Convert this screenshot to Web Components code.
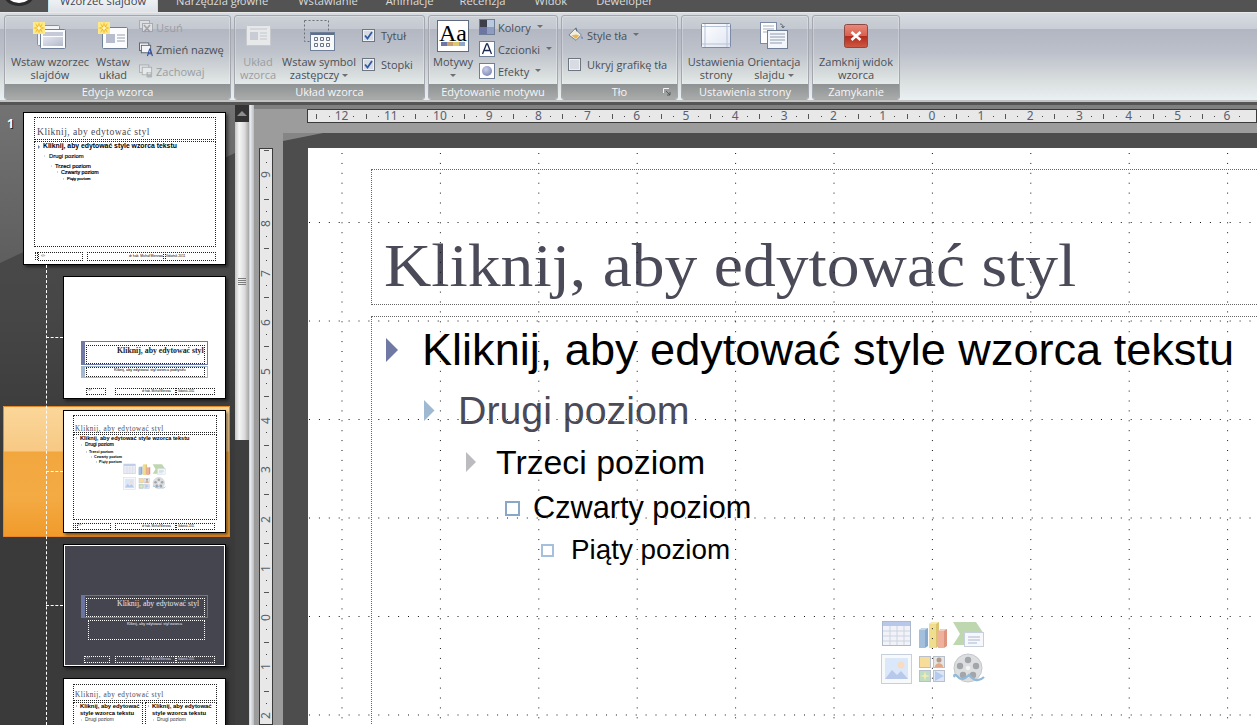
<!DOCTYPE html>
<html lang="pl">
<head>
<meta charset="utf-8">
<title>Wzorzec slajdów</title>
<style>
  html, body { margin: 0; height: 725px; overflow: hidden; background: #3c3c3c; }
  body { font: 11px "Open Sans", "Noto Sans", sans-serif; }
</style>
</head>
<body>
<script>
const star = (x, y) => `
  <g transform="translate(${x} ${y})">
    <rect width="12" height="12" fill="#fce98a"/>
    <path d="M6 0l1 4 3-3-2 4 4 1-4 1 2 4-3-3-1 4-1-4-3 3 2-4-4-1 4-1-2-4 3 3z" fill="#f3b516"/>
    <path d="M6 3l1 2 2 1-2 1-1 2-1-2-2-1 2-1z" fill="#fff6c8"/>
  </g>`;

const ICONS = {
  master: `<svg width="34" height="28" viewBox="0 0 34 28">
    <rect x="4.5" y="3.5" width="22" height="20" rx="1" fill="#f2f4f8" stroke="#8392a8"/>
    <rect x="7.5" y="7.5" width="25" height="19" rx="1" fill="#fbfcfe" stroke="#6f7f97"/>
    <defs><linearGradient id="m" x1="0" y1="0" x2="1" y2="1"><stop offset="0" stop-color="#e4e6ee"/><stop offset="1" stop-color="#b4bacd"/></linearGradient></defs>
    <rect x="10" y="10" width="20" height="4" fill="#c6cad8"/><rect x="10" y="15" width="20" height="9" fill="url(#m)"/>
    ${star(0, 0)}</svg>`,
  layout: `<svg width="30" height="28" viewBox="0 0 30 28">
    <rect x="4.5" y="5.5" width="25" height="21" rx="1" fill="#fbfcfe" stroke="#6f7f97"/>
    <rect x="8" y="12" width="9" height="9" fill="#b7bdcf"/>
    <path d="M19 13h8M19 16h8M19 19h8" stroke="#98a0b0"/>
    ${star(0, 0)}</svg>`,
  remove: `<svg width="14" height="14" viewBox="0 0 14 14" opacity=".55">
    <rect x=".5" y=".5" width="10" height="8" fill="#eee" stroke="#8e9298"/><rect x="3.5" y="3.5" width="10" height="8" fill="#f6f6f6" stroke="#8e9298"/>
    <path d="M5 5l6 7M11 5l-6 7" stroke="#8b8b8b" stroke-width="1.8"/></svg>`,
  rename: `<svg width="14" height="15" viewBox="0 0 15 15">
    <rect x=".5" y=".5" width="10" height="8" fill="#fff" stroke="#59606b"/><rect x="2.5" y="3" width="10" height="8" fill="#f2f4f8" stroke="#59606b"/>
    <path d="M9 14.5L11.400 7h.6l2.400 7.500M10 12h3.600" fill="none" stroke="#2d4fa8" stroke-width="1.200"/></svg>`,
  save: `<svg width="14" height="14" viewBox="0 0 15 14" opacity=".55">
    <rect x=".5" y=".5" width="10" height="8" fill="#eee" stroke="#8e9298"/><rect x="3.5" y="3" width="10" height="8" fill="#f6f6f6" stroke="#8e9298"/>
    <rect x="8" y="8" width="6" height="6" rx="1" fill="#8f9397"/><rect x="9.500" y="8.500" width="3" height="2" fill="#ddd"/></svg>`,
  masterOff: `<svg width="25" height="21" viewBox="0 0 25 21">
    <rect x=".5" y=".5" width="24" height="20" rx="1" fill="#e6e8ea" stroke="#c6cace"/>
    <rect x="4" y="7" width="8" height="8" fill="#c9ccd2"/>
    <path d="M14 8h7M14 11h7M14 14h7" stroke="#c2c6cc"/><path d="M4 4h17" stroke="#d4d7dc" stroke-width="2"/></svg>`,
  symbol: `<svg width="31" height="31" viewBox="0 0 31 31">
    <rect x=".5" y=".5" width="24" height="21" fill="none" stroke="#6a6f78" stroke-dasharray="2 2"/>
    <rect x="6.500" y="12.500" width="24" height="18" fill="#f7f8fa" stroke="#6f7f97"/><path d="M7 14h23" stroke="#5f6f8b" stroke-width="2"/>
    <path d="M10.500 17.500h3v3h-3zM16.500 17.500h3v3h-3zM22.500 17.500h3v3h-3zM10.500 23.500h3v3h-3zM16.500 23.500h3v3h-3zM22.500 23.500h3v3h-3z" fill="none" stroke="#6b7486"/></svg>`,
  colors: `<svg width="16" height="16" viewBox="0 0 16 16">
    <rect x=".5" y=".5" width="15" height="15" fill="#fff" stroke="#6f7f97"/>
    <rect x="1" y="1" width="7" height="7" fill="#3e3e4a"/><rect x="8" y="1" width="7" height="7" fill="#b9c9de"/><rect x="1" y="8" width="7" height="7" fill="#6d76a3"/><rect x="8" y="8" width="7" height="7" fill="#8f9cc0"/></svg>`,
  fonts: `<svg width="16" height="16" viewBox="0 0 16 16"><rect x=".5" y=".5" width="15" height="15" fill="#fff" stroke="#6f7f97"/>
    <path d="M3.500 13L7.500 3h1L12.500 13M5.500 9.500h5" fill="none" stroke="#1c2a52" stroke-width="1.300"/></svg>`,
  effects: `<svg width="16" height="16" viewBox="0 0 16 16"><defs><radialGradient id="e" cx=".4" cy=".35" r=".7"><stop offset="0" stop-color="#c8cee8"/><stop offset="1" stop-color="#7e88b8"/></radialGradient></defs>
    <rect x=".5" y=".5" width="15" height="15" fill="#fff" stroke="#6f7f97"/><circle cx="8" cy="8" r="5" fill="url(#e)"/></svg>`,
  paint: `<svg width="16" height="16" viewBox="0 0 18 16">
    <path d="M1 8l7-7 7 7-6 6z" fill="#f2eede" stroke="#6a7a96"/><path d="M4 8.500l5-1 3.500 1-3.500 4z" fill="#e8b64a"/>
    <path d="M8 1l1-1 1 4" fill="none" stroke="#4c5c78"/><path d="M15.500 9c1 1.500 1.500 2.500.5 3.500-1-.5-1.200-2-.5-3.500z" fill="#4a74b8"/></svg>`,
  setup: `<svg width="30" height="25" viewBox="0 0 30 25">
    <defs><linearGradient id="s" x1="0" y1="0" x2="1" y2="1"><stop offset="0" stop-color="#fff"/><stop offset="1" stop-color="#dfe5f2"/></linearGradient></defs>
    <rect x=".5" y=".5" width="29" height="24" rx="1" fill="url(#s)" stroke="#7d8ba6"/><path d="M4 1v23M26 1v23M1 3.500h28M1 21h28" stroke="#b7c2d6"/></svg>`,
  orient: `<svg width="28" height="27" viewBox="0 0 28 27">
    <rect x=".5" y=".5" width="16" height="21" fill="#fff" stroke="#7d8ba6"/><path d="M3 4h11M3 7h11M3 10h8" stroke="#a5aebd"/>
    <path d="M20 2c2 0 3 1 3 3M21.500 4l1.500 2 1.500-2" fill="none" stroke="#5c6778"/>
    <rect x="7.500" y="8.500" width="20" height="18" fill="#f3f6fb" stroke="#6f7f97"/><path d="M10 12h15M10 15h15M10 18h15M10 21h12" stroke="#8f9bb0"/></svg>`,
  close: `<svg width="24" height="24" viewBox="0 0 24 24">
    <defs><linearGradient id="c" x1="0" y1="0" x2="0" y2="1"><stop offset="0" stop-color="#e88a7c"/><stop offset=".5" stop-color="#d9604e"/><stop offset=".51" stop-color="#b22a1c"/><stop offset="1" stop-color="#cf5a44"/></linearGradient></defs>
    <rect x=".5" y=".5" width="23" height="23" rx="2" fill="url(#c)" stroke="#8c4a44"/><path d="M7.500 8l9 8M16.500 8l-9 8" stroke="#fff" stroke-width="2.600"/></svg>`,
  launcher: `<svg width="9" height="9" viewBox="0 0 9 9"><path d="M.5 5V.5H6" fill="none" stroke="#f4f4f4"/><path d="M3 3l4 4M7 4v3H4" fill="none" stroke="#56585a"/></svg>`
};

class XIcon extends HTMLElement {
  constructor() {
    super();
    this.attachShadow({mode: 'open'});
    this.shadowRoot.innerHTML = `<style>:host { display: inline-flex; flex: none; } svg { display: block; }</style>` + ICONS[this.getAttribute('name')];
  }
}
customElements.define('x-icon', XIcon);

class XCaret extends HTMLElement {
  constructor() {
    super();
    this.attachShadow({mode: 'open'});
    this.shadowRoot.innerHTML = `<style>
      :host { display: inline-block; width: 0; height: 0; margin: 0 0 2px 3px; vertical-align: middle;
        border-left: 3px solid transparent; border-right: 3px solid transparent; border-top: 3px solid #6c6f74; }
    </style>`;
  }
}
customElements.define('x-caret', XCaret);

class XTabs extends HTMLElement {
  constructor() {
    super();
    this.attachShadow({mode: 'open'});
    this.shadowRoot.innerHTML = `<style>
      :host { display: flex; height: 12px; background: #535353; overflow: hidden; position: relative; flex: none; }
      .orb { position: absolute; left: 6px; top: -17px; width: 26px; height: 20px; border-radius: 50%; background: #fff; box-shadow: 0 0 0 3px #2c2c2c; }
      .row { display: flex; margin-left: 48px; height: 12px; font: 11.2px/1 "Open Sans", sans-serif; color: #dcdcdc; }
      .tab { margin-top: -5px; white-space: nowrap; }
      .active { width: 110px; height: 12px; background: linear-gradient(#eef1f4, #dfe3e8); color: #3c4350;
        box-shadow: inset 1px 0 #bfe6ee, inset -1px 0 #bfe6ee; text-align: center; margin-right: 18px; }
      .active span { display: block; margin-top: -5px; }
    </style>
    <div class="orb"></div>
    <div class="row">
      <div class="active"><span>Wzorzec slajdów</span></div>
      <div class="tab" style="margin-right:30px">Narzędzia główne</div>
      <div class="tab" style="margin-right:28px">Wstawianie</div>
      <div class="tab" style="margin-right:26px">Animacje</div>
      <div class="tab" style="margin-right:29px">Recenzja</div>
      <div class="tab" style="margin-right:29px">Widok</div>
      <div class="tab">Deweloper</div>
    </div>`;
  }
}
customElements.define('x-tabs', XTabs);

class XRibbon extends HTMLElement {
  constructor() {
    super();
    this.attachShadow({mode: 'open'});
    this.shadowRoot.innerHTML = `<style>
      :host { display: flex; flex: none; box-sizing: border-box; height: 93px; gap: 3px; padding: 2px 0 5px 4px;
        background: linear-gradient(#d7dbe2 0, #c9cdd5 16px, #b2b6c2 16px, #bcc0ca 40px, #dbe0e0 70px, #e8eff0 85px, #e8eff0 87px, #c3c3c3 87px, #c3c3c3 89px, #555 89px);
        border-top: 1px solid #e9e9e9; }
    </style><slot></slot>`;
  }
}
customElements.define('x-ribbon', XRibbon);

class XGroup extends HTMLElement {
  constructor() {
    super();
    this.attachShadow({mode: 'open'});
    this.shadowRoot.innerHTML = `<style>
      :host { display: flex; flex-direction: column; box-sizing: border-box; height: 85px; flex: none;
        border: 1px solid #a4a7ad; border-radius: 3px; overflow: hidden; box-shadow: inset 0 0 0 1px rgba(255,255,255,.25);
        background: linear-gradient(#ccd0d7 0, #c4c8d0 13px, #b3b7c2 13px, #bec2cb 36px, #d9dede 60px, #e4e9ea 68px); }
      .body { display: flex; height: 68px; flex: none; }
      .foot { flex: 1; display: flex; align-items: center; justify-content: center; position: relative;
        background: linear-gradient(#8f9292, #a9abab); color: #f6f6f6; font: 11px/1 "Open Sans", sans-serif; }
      .launch { position: absolute; right: 5px; top: 4px; display: flex; }
    </style>
    <div class="body"><slot></slot></div>
    <div class="foot"><span id="label"></span><div class="launch"><slot name="launcher"></slot></div></div>`;
    this.shadowRoot.querySelector('#label').textContent = this.getAttribute('label');
  }
}
customElements.define('x-group', XGroup);

class XBig extends HTMLElement {
  constructor() {
    super();
    this.attachShadow({mode: 'open'});
    this.shadowRoot.innerHTML = `<style>
      :host { display: flex; flex-direction: column; align-items: center; flex: none; text-align: center;
        font: 11px/13px "Open Sans", sans-serif; color: #4a4f57; white-space: nowrap; }
      :host([disabled]) { color: #9a9da2; }
      .icon { height: 39px; display: flex; align-items: center; justify-content: center; }
    </style>
    <div class="icon"><slot name="icon"></slot></div><div><slot></slot></div>`;
  }
}
customElements.define('x-big', XBig);

class XColumn extends HTMLElement {
  constructor() {
    super();
    this.attachShadow({mode: 'open'});
    this.shadowRoot.innerHTML = `<style>
      :host { display: flex; flex-direction: column; flex: none; }
      :host([wide]) { padding-top: 11px; gap: 13px; }
    </style><slot></slot>`;
  }
}
customElements.define('x-column', XColumn);

class XSmall extends HTMLElement {
  constructor() {
    super();
    this.attachShadow({mode: 'open'});
    this.shadowRoot.innerHTML = `<style>
      :host { display: flex; align-items: center; gap: 3px; height: 22px; font: 11px/1 "Open Sans", sans-serif; white-space: nowrap; color: #4a4f57; }
      :host([disabled]) { color: #9a9da2; }
      :host([wide]) { height: 16px; }
    </style><slot></slot>`;
  }
}
customElements.define('x-small', XSmall);

class XCheck extends HTMLElement {
  constructor() {
    super();
    this.attachShadow({mode: 'open'});
    const tick = this.hasAttribute('checked') ? '<path d="M3 6.500l2.500 3L10 3" fill="none" stroke="#2f5aa8" stroke-width="1.800"/>' : '';
    this.shadowRoot.innerHTML = `<style>
      :host { display: flex; align-items: center; gap: 6px; height: 16px; font: 11px/1 "Open Sans", sans-serif; white-space: nowrap; color: #4a4f57; }
      svg { flex: none; }
    </style>
    <svg width="13" height="13" viewBox="0 0 13 13"><rect x=".5" y=".5" width="12" height="12" fill="#eef0f3" stroke="#6d7580"/><rect x="2" y="2" width="9" height="9" fill="#d8dce2"/>${tick}</svg>
    <slot></slot>`;
  }
}
customElements.define('x-check', XCheck);

class XMotif extends HTMLElement {
  constructor() {
    super();
    this.attachShadow({mode: 'open'});
    this.shadowRoot.innerHTML = `<style>
      :host { display: flex; flex-direction: column; align-items: center; box-sizing: border-box; width: 32px; height: 32px; background: #fff; border: 1px solid #5f6b7e; position: relative; }
      .bar { position: absolute; left: 3px; right: 3px; top: 21px; height: 4px; background: linear-gradient(90deg, #6d76a3 0 25%, #c8a070 25% 50%, #e0c870 50% 75%, #8fa8c8 75%); }
      span { font: 24px/24px "Liberation Serif", serif; color: #000; position: relative; }
    </style><div class="bar"></div><span>Aa</span>`;
  }
}
customElements.define('x-motif', XMotif);

const contentIcons = `<svg viewBox="0 0 104 66" width="100%" height="100%" style="display:block">
  <rect x="1.500" y="2.500" width="28" height="24" fill="#f1f3f8" stroke="#adb8cb"/><rect x="2" y="3" width="27" height="4" fill="#b7c8ec"/>
  <path d="M2 12h27M2 17h27M2 22h27M9 7v19M16 7v19M23 7v19" stroke="#cdd3e0"/>
  <path d="M38 11l3-2h6v18l-3 2H38z" fill="#87a9cb"/><path d="M38 11l3-2h6l-3 2z" fill="#c5d8ea"/><rect x="38" y="11" width="6" height="18" fill="#a4bfdb"/>
  <path d="M48 5l3-2h7v24l-3 2h-7z" fill="#dcc46e"/><path d="M48 5l3-2h7l-3 2z" fill="#f6eab4"/><rect x="48" y="5" width="7" height="24" fill="#f0dd90"/>
  <path d="M57 12l3-2h6v17l-3 2h-6z" fill="#dd9580"/><path d="M57 12l3-2h6l-3 2z" fill="#f5cdbf"/><rect x="57" y="12" width="6" height="17" fill="#efb09c"/>
  <path d="M72 3h23l8 12-8 11H72l7-11z" fill="#bfd7ae"/><rect x="83.500" y="13.500" width="19" height="14" fill="#f6f8fb" stroke="#c5d0dc"/><path d="M87 18h12M87 21h12M87 24h9" stroke="#a9b8cd"/>
  <rect x=".5" y="35.500" width="30" height="29" fill="#f7f9fb" stroke="#c5d0dc"/><rect x="4" y="39" width="23" height="21" fill="#dbe8fa"/><circle cx="20" cy="46" r="3.500" fill="#f8dcc2"/><path d="M4 60l7-9 5 5 4-4 7 8z" fill="#b8c8ea"/>
  <rect x="38.500" y="37.500" width="11" height="11" fill="#f7dc9a" stroke="#b8c0cd"/><rect x="52.500" y="37.500" width="11" height="11" fill="#e8e4e0" stroke="#b8c0cd"/><circle cx="58" cy="41" r="2.500" fill="#b09a8c"/><path d="M54 48c0-5 8-5 8 0z" fill="#e0a888"/>
  <rect x="38.500" y="51.500" width="11" height="11" fill="#bfdcc4" stroke="#b8c0cd"/><path d="M44 52l1 4 4 1-4 1-1 4-1-4-4-1 4-1z" fill="#f2ecb0"/><rect x="52.500" y="51.500" width="11" height="11" fill="#dce6f6" stroke="#b8c0cd"/><path d="M54 52l9 5-9 5z" fill="#b5cbee"/>
  <circle cx="87" cy="49" r="14" fill="#dcdee0" stroke="#c6c8cc"/><circle cx="87" cy="49" r="2.200" fill="#f4f4f4"/>
  <circle cx="87" cy="41" r="3.200" fill="#a2a6aa"/><circle cx="95" cy="47" r="3.200" fill="#a2a6aa"/><circle cx="92" cy="56" r="3.200" fill="#a2a6aa"/><circle cx="82" cy="56" r="3.200" fill="#a2a6aa"/><circle cx="79" cy="47" r="3.200" fill="#a2a6aa"/>
  <path d="M74 58c-2-2 0-3 2-1 4 5 8 3 12-1 5 6 10 7 15 2" fill="none" stroke="#92bad8" stroke-width="2.200"/>
</svg>`;

class XContentIcons extends HTMLElement {
  constructor() {
    super();
    this.attachShadow({mode: 'open'});
    this.shadowRoot.innerHTML = `<style>:host { display: block; position: absolute; }</style>` + contentIcons;
  }
}
customElements.define('x-content-icons', XContentIcons);

// one thumbnail: the boxes and texts sit on the slide as on a free canvas, all in px from its corner
const ph = (l, t, w, h, c) => `<i class="ph" style="left:${l}px;top:${t}px;width:${w}px;height:${h}px;${c ? 'border-color:' + c : ''}"></i>`;
const tx = (l, t, size, text, extra) => `<b class="tx" style="left:${l}px;top:${t}px;font-size:${size}px;${extra || ''}">${text}</b>`;
const mk = (l, t, s, c) => `<i class="mk" style="left:${l}px;top:${t}px;border-width:${s}px 0 ${s}px ${s}px;border-left-color:${c}"></i>`;
const serif = 'font-family:Liberation Serif,serif;color:#4a4a58;letter-spacing:.45px;';
const heavy = '-webkit-text-stroke:.2px #000;';
const band = (l, t, w, h, c) => `<i class="band" style="left:${l}px;top:${t}px;width:${w}px;height:${h}px;border-color:${c};border-left-width:4px"></i>`;

const SLIDES = {
  master: () =>
    ph(10, 4, 182, 23) + ph(10, 28, 182, 106) + ph(11, 139, 3, 8) + ph(14, 139, 45, 9) + ph(63, 139, 77, 9) + ph(141, 139, 51, 9) +
    tx(13, 13, 9.6, 'Kliknij, aby edytować styl', serif) +
    tx(19, 29, 6.85, 'Kliknij, aby edytować style wzorca tekstu', 'font-weight:bold') + mk(14, 32, 2, '#7079a4') +
    tx(25, 40, 5.9, 'Drugi poziom', 'color:#333;' + heavy) + mk(20, 42, 1.5, '#a0b9d2') +
    tx(31, 50, 5.8, 'Trzeci poziom', heavy) + mk(27, 52, 1.5, '#b8b8bc') +
    tx(37, 56, 5.3, 'Czwarty poziom', heavy) + mk(33, 58, 1.3, '#8aa7c6') +
    tx(43, 64, 4.1, 'Piąty poziom', heavy) + mk(39, 65, 1.2, '#8aa7c6') +
    tx(17, 142, 3.3, '‹#›') + tx(105, 142, 3.3, 'dr hab. Michał Mierzwa') + tx(142, 142, 3.3, 'Gdańsk 2011'),
  title: () =>
    band(17, 64, 127, 24, '#7079a4') + band(17, 89, 127, 12, '#a2b8d0') +
    ph(22, 68, 119, 19) + ph(22, 90, 119, 10) +
    tx(53, 69, 7.8, 'Kliknij, aby edytować styl', 'font-family:Liberation Serif,serif;color:#222;font-weight:bold') +
    tx(50, 91, 3.8, 'Kliknij, aby edytować styl wzorca podtytułu') +
    tx(24, 112, 2.8, '‹#›') + ph(22, 111, 20, 7) + ph(51, 111, 61, 7) + ph(112, 111, 39, 7) + tx(78, 113, 2.8, 'dr hab. Michał Mierzwa') + tx(114, 113, 2.8, 'Gdańsk 2011'),
  content: () =>
    ph(9, 4, 144, 18) + ph(9, 23, 144, 86) +
    tx(11, 14, 7.2, 'Kliknij, aby edytować styl', serif + 'letter-spacing:.5px') +
    tx(16, 24, 5.6, 'Kliknij, aby edytować style wzorca tekstu', 'font-weight:bold') + mk(12, 26, 1.5, '#7079a4') +
    tx(21, 31, 4.9, 'Drugi poziom', 'color:#333;' + heavy) + mk(17, 33, 1.2, '#a0b9d2') +
    tx(25, 39, 3.7, 'Trzeci poziom', 'font-weight:bold') + mk(22, 40, 1, '#a0a0a4') +
    tx(30, 44, 3.7, 'Czwarty poziom', 'font-weight:bold') + mk(27, 45, 1, '#8aa7c6') +
    tx(35, 49, 3.7, 'Piąty poziom', 'font-weight:bold') + mk(32, 50, 1, '#8aa7c6') +
    `<x-content-icons style="left:59px;top:52px;width:43px;height:27px"></x-content-icons>` +
    ph(9, 112, 3, 7) + tx(14, 113, 2.8, '‹#›') + ph(13, 112, 34, 7) + ph(51, 112, 61, 7) + ph(112, 112, 39, 7) + tx(78, 114, 2.8, 'dr hab. Michał Mierzwa') + tx(114, 114, 2.8, 'Gdańsk 2011'),
  dark: () =>
    band(16, 49, 127, 23, '#6c75a0') + ph(21, 52, 119, 19, '#fff') + ph(23, 74, 117, 20, '#fff') +
    tx(52, 53, 7.8, 'Kliknij, aby edytować styl', 'font-family:Liberation Serif,serif;color:#e4e8f0') +
    tx(62, 76, 3.8, 'Kliknij, aby edytować styl wzorca', 'color:#e4e8f0') +
    ph(19, 110, 26, 7, '#fff') + ph(50, 110, 61, 7, '#fff') + ph(111, 110, 39, 7, '#fff') +
    tx(21, 111, 2.8, '‹#›', 'color:#dde') + tx(77, 112, 2.8, 'dr hab. Michał Mierzwa', 'color:#dde') + tx(113, 112, 2.8, 'Gdańsk 2011', 'color:#dde'),
  two: () =>
    ph(9, 5, 144, 17) + ph(9, 23, 70, 100) + ph(81, 23, 72, 100) +
    tx(11, 12, 7.2, 'Kliknij, aby edytować styl', serif + 'letter-spacing:.5px') +
    tx(16, 24, 5.9, 'Kliknij, aby edytować', 'font-weight:bold') + tx(16, 31, 5.9, 'style wzorca tekstu', 'font-weight:bold') + tx(21, 38, 4.9, 'Drugi poziom', 'color:#333') + mk(12, 26, 1.5, '#7079a4') + mk(17, 40, 1.2, '#a0b9d2') +
    tx(88, 24, 5.9, 'Kliknij, aby edytować', 'font-weight:bold') + tx(88, 31, 5.9, 'style wzorca tekstu', 'font-weight:bold') + tx(93, 38, 4.9, 'Drugi poziom', 'color:#333') + mk(84, 26, 1.5, '#7079a4') + mk(89, 40, 1.2, '#a0b9d2')
};

class XThumb extends HTMLElement {
  constructor() {
    super();
    this.attachShadow({mode: 'open'});
    const kind = this.getAttribute('kind');
    this.shadowRoot.innerHTML = `<style>
      :host { display: flex; flex: none; box-sizing: border-box; width: 227px; height: 123px; margin: 0 0 11px 3px; padding-left: 60px; position: relative; }
      :host([first]) { height: 153px; padding-left: 20px; }
      :host([selected]) { height: 131px; margin: -4px 0 7px 3px; padding: 4px 0 0 60px;
        border-radius: 1px; outline: 1px solid #e8862a; outline-offset: -1px;
        background: linear-gradient(#fbd79a 0, #f7c984 45px, #f2a63e 46px, #f4ab44 90px, #f09a2a 100%); }
      .num { position: absolute; left: 4px; top: 6px; color: #fff; font: bold 12px/1 "Open Sans", sans-serif; text-shadow: 1px 1px 0 #222; }
      .slide { position: relative; box-sizing: border-box; width: 163px; height: 123px; background: #fff; border: 1px solid #000; overflow: hidden; box-shadow: 2px 2px 3px rgba(0,0,0,.5); flex: none; }
      :host([first]) .slide { width: 203px; height: 153px; }
      :host([kind=dark]) .slide { background: #45454f; border: 2px solid #fff; outline: 1px solid #000; outline-offset: -1px; }
      .ph { position: absolute; box-sizing: border-box; border: 1px dotted #222; }
      .band { position: absolute; box-sizing: border-box; border: 1px solid; }
      .tx { position: absolute; font: normal 6px/1.2 "Liberation Sans", sans-serif; color: #000; white-space: nowrap; }
      .mk { position: absolute; width: 0; height: 0; border-style: solid; border-color: transparent; }
      .link { position: absolute; left: 43px; top: 61px; width: 17px; border-top: 1px dashed #fff; }
      :host([selected]) .link { top: 65px; }
    </style>
    ${this.getAttribute('num') ? `<div class="num">${this.getAttribute('num')}</div>` : ''}
    <div class="slide">${SLIDES[kind]()}</div>
    ${this.hasAttribute('first') ? '' : '<div class="link"></div>'}`;
  }
}
customElements.define('x-thumb', XThumb);

class XPanel extends HTMLElement {
  constructor() {
    super();
    this.attachShadow({mode: 'open'});
    this.shadowRoot.innerHTML = `<style>
      :host { display: flex; flex-direction: column; flex: none; width: 235px; height: 100%; box-sizing: border-box; padding-top: 7px; position: relative; overflow: hidden;
        background: linear-gradient(#4c4c4c 0, #474747 200px, #3a3a3a 340px); }
      .wedge { position: absolute; left: 0; top: 0; right: 0; height: 160px; clip-path: polygon(0 0, 100% 0, 100% 48px, 0 158px); background: linear-gradient(#737373, #5e5e5e); }
      .tree { position: absolute; left: 46px; top: 160px; bottom: 0; border-left: 1px dashed #fff; z-index: 1; }
    </style>
    <div class="wedge"></div><slot></slot><div class="tree"></div>`;
  }
}
customElements.define('x-panel', XPanel);

class XScroll extends HTMLElement {
  constructor() {
    super();
    this.attachShadow({mode: 'open'});
    this.shadowRoot.innerHTML = `<style>
      :host { display: flex; flex-direction: column; flex: none; width: 14px; height: 100%; background: #3e3e3e; }
      .up { height: 17px; display: flex; align-items: center; justify-content: center; background: #333; }
      .up i { width: 0; height: 0; border: 5px solid transparent; border-top: 0; border-bottom: 5px solid #8e8e8e; }
      .thumb { height: 318px; flex: none; display: flex; align-items: center; justify-content: center;
        background: linear-gradient(90deg, #c4c4c4, #f6f6f6 30%, #dadada 70%, #a4a4a4); }
      .grip { width: 8px; height: 7px; background: repeating-linear-gradient(#7d7d7d 0 1px, transparent 1px 2px); }
    </style>
    <div class="up"><i></i></div><div class="thumb"><div class="grip"></div></div>`;
  }
}
customElements.define('x-scroll', XScroll);

class XRuler extends HTMLElement {
  constructor() {
    super();
    this.attachShadow({mode: 'open'});
    const vertical = this.hasAttribute('vertical');
    const numbers = this.getAttribute('numbers').split(',');
    let cells = '';
    numbers.forEach(n => {
      cells += `<div class="cell"><i class="tick"></i></div><div class="cell"><i class="dot"></i></div><div class="cell"><span>${n}</span></div><div class="cell"><i class="dot"></i></div>`;
    });
    this.shadowRoot.innerHTML = `<style>
      :host { display: flex; box-sizing: border-box; background: #e8e8e8; border: 1px solid #3a3a3a; overflow: hidden; color: #5a6070; font: 12px/1 "Noto Sans", sans-serif; }
      :host([vertical]) { flex-direction: column; }
      .cell { flex: none; width: 12.31px; display: flex; align-items: center; justify-content: center; white-space: nowrap; }
      :host([vertical]) .cell { width: auto; height: 12.31px; }
      :host([vertical]) span { writing-mode: vertical-rl; transform: rotate(180deg); }
      .tick { width: 1px; height: 5px; background: #555; }
      :host([vertical]) .tick { width: 5px; height: 1px; }
      .dot { width: 1px; height: 1px; background: #444; }
      style + .cell { margin-${vertical ? 'top' : 'left'}: ${this.getAttribute('offset')}px; }
    </style>${cells}`;
  }
}
customElements.define('x-ruler', XRuler);

class XLevel extends HTMLElement {
  constructor() {
    super();
    this.attachShadow({mode: 'open'});
    const kind = this.getAttribute('marker');
    const size = this.getAttribute('msize');
    const color = this.getAttribute('mcolor');
    const mark = kind === 'tri'
      ? `<svg width="${size * .5}" height="${size}" viewBox="0 0 12 24"><path d="M0 0l12 12L0 24z" fill="${color}"/></svg>`
      : `<svg width="${size}" height="${size}" viewBox="0 0 ${size} ${size}"><rect x="1" y="1" width="${size - 2}" height="${size - 2}" fill="#fff" stroke="${color}" stroke-width="2"/></svg>`;
    this.shadowRoot.innerHTML = `<style>
      :host { display: flex; align-items: center; font-family: "Liberation Sans", Arial, sans-serif; white-space: nowrap; color: #000; }
      .m { flex: none; display: flex; align-items: center; }
      svg { display: block; }
    </style><div class="m" style="width:${this.getAttribute('mwidth')}px">${mark}</div><slot></slot>`;
  }
}
customElements.define('x-level', XLevel);

class XSlide extends HTMLElement {
  constructor() {
    super();
    this.attachShadow({mode: 'open'});
    this.shadowRoot.innerHTML = `<style>
      :host { display: block; position: relative; width: 100%; height: 100%; background: #fff; overflow: hidden; box-sizing: border-box; padding: 21px 0 0 63px; }
      .title { box-sizing: border-box; width: 1100px; height: 136px; border: 1px dotted #666; display: flex; align-items: flex-end; padding: 0 0 3px 12px;
        font: 62px/72px "Liberation Serif", "Times New Roman", serif; color: #4a4a58; white-space: nowrap; }
      .title ::slotted(span) { display: inline-block; transform: scaleX(1.058); transform-origin: 0 50%; }
      .body { box-sizing: border-box; width: 1100px; height: 600px; margin-top: 11px; border: 1px dotted #666; padding-top: 7px; }
      svg.grid { position: absolute; inset: 0; pointer-events: none; }
    </style>
    <div class="title"><slot name="title"></slot></div>
    <div class="body"><slot></slot></div>
    <svg class="grid" width="949" height="577" shape-rendering="crispEdges">
      <defs>
        <pattern id="v" patternUnits="userSpaceOnUse" x="33.500" y="5" width="98.400" height="9.900"><rect width="1" height="1" fill="#111"/></pattern>
        <pattern id="h" patternUnits="userSpaceOnUse" x="1" y="74" width="9.900" height="98.500"><rect width="1" height="1" fill="#111"/></pattern>
      </defs>
      <rect width="949" height="577" fill="url(#v)"/><rect width="949" height="577" fill="url(#h)"/>
    </svg>`;
  }
}
customElements.define('x-slide', XSlide);

class XEditor extends HTMLElement {
  constructor() {
    super();
    this.attachShadow({mode: 'open'});
    this.shadowRoot.innerHTML = `<style>
      :host { display: grid; flex: 1; min-width: 0; height: 100%; grid-template-columns: 5px 15px 9px 1fr; grid-template-rows: 4px 15px 9px 1fr;
        background: linear-gradient(#808080 0, #808080 4px, #9c9c9c 4px); overflow: hidden; }
      .h { grid-column: 1 / -1; grid-row: 2; margin-left: 53px; min-width: 0; }
      .v { grid-column: 2; grid-row: 4; margin-top: 15px; min-height: 0; overflow: hidden; display: flex; }
      .desk { grid-column: 4; grid-row: 4; position: relative; padding: 15px 0 0 25px; background: #4d4d4d; min-width: 0; min-height: 0; overflow: hidden; }
      .corner { position: absolute; left: 0; top: 0; width: 40px; height: 8px; background: #858585; clip-path: polygon(0 0, 100% 0, 0 100%); }
    </style>
    <div class="h"><slot name="hruler"></slot></div>
    <div class="v"><slot name="vruler"></slot></div>
    <div class="desk"><div class="corner"></div><slot></slot></div>`;
  }
}
customElements.define('x-editor', XEditor);

class XApp extends HTMLElement {
  constructor() {
    super();
    this.attachShadow({mode: 'open'});
    this.shadowRoot.innerHTML = `<style>
      :host { display: flex; flex-direction: column; width: 1257px; height: 725px; overflow: hidden; }
      .work { display: flex; flex: 1; min-height: 0; height: 620px; }
      .split { flex: none; width: 5px; background: linear-gradient(90deg, #c6cbd1, #e6e9ec 30%, #b7bcc4); }
    </style>
    <slot name="top"></slot>
    <div class="work"><slot name="panel"></slot><slot name="scroll"></slot><div class="split"></div><slot></slot></div>`;
  }
}
customElements.define('x-app', XApp);

document.body.insertAdjacentHTML('beforeend', `
<x-app>
  <x-tabs slot="top"></x-tabs>
  <x-ribbon slot="top">
    <x-group label="Edycja wzorca" style="width:227px">
      <x-big style="width:84px;margin-left:3px"><x-icon slot="icon" name="master"></x-icon>Wstaw wzorzec<br>slajdów</x-big>
      <x-big style="width:42px"><x-icon slot="icon" name="layout"></x-icon>Wstaw<br>układ</x-big>
      <x-column style="margin-left:5px">
        <x-small disabled><x-icon name="remove"></x-icon>Usuń</x-small>
        <x-small><x-icon name="rename"></x-icon>Zmień nazwę</x-small>
        <x-small disabled><x-icon name="save"></x-icon>Zachowaj</x-small>
      </x-column>
    </x-group>
    <x-group label="Układ wzorca" style="width:191px">
      <x-big disabled style="width:40px;margin-left:3px"><x-icon slot="icon" name="masterOff"></x-icon>Układ<br>wzorca</x-big>
      <x-big style="width:78px;margin-left:2px"><x-icon slot="icon" name="symbol"></x-icon>Wstaw symbol<br>zastępczy<x-caret></x-caret></x-big>
      <x-column wide style="margin-left:4px">
        <x-check checked>Tytuł</x-check>
        <x-check checked>Stopki</x-check>
      </x-column>
    </x-group>
    <x-group label="Edytowanie motywu" style="width:130px">
      <x-big style="width:44px;margin-left:2px"><x-motif slot="icon"></x-motif>Motywy<br><x-caret style="margin-left:0"></x-caret></x-big>
      <x-column style="margin-left:4px">
        <x-small><x-icon name="colors"></x-icon>Kolory<x-caret></x-caret></x-small>
        <x-small><x-icon name="fonts"></x-icon>Czcionki<x-caret></x-caret></x-small>
        <x-small><x-icon name="effects"></x-icon>Efekty<x-caret></x-caret></x-small>
      </x-column>
    </x-group>
    <x-group label="Tło" style="width:117px">
      <x-column wide style="margin-left:6px">
        <x-small wide><x-icon name="paint"></x-icon>Style tła<x-caret></x-caret></x-small>
        <x-check>Ukryj grafikę tła</x-check>
      </x-column>
      <x-icon slot="launcher" name="launcher"></x-icon>
    </x-group>
    <x-group label="Ustawienia strony" style="width:128px">
      <x-big style="width:66px;margin-left:1px"><x-icon slot="icon" name="setup"></x-icon>Ustawienia<br>strony</x-big>
      <x-big style="width:50px"><x-icon slot="icon" name="orient"></x-icon>Orientacja<br>slajdu<x-caret></x-caret></x-big>
    </x-group>
    <x-group label="Zamykanie" style="width:88px">
      <x-big style="width:86px"><x-icon slot="icon" name="close"></x-icon>Zamknij widok<br>wzorca</x-big>
    </x-group>
  </x-ribbon>
  <x-panel slot="panel">
    <x-thumb first num="1" kind="master"></x-thumb>
    <x-thumb kind="title"></x-thumb>
    <x-thumb selected kind="content"></x-thumb>
    <x-thumb kind="dark"></x-thumb>
    <x-thumb kind="two"></x-thumb>
  </x-panel>
  <x-scroll slot="scroll"></x-scroll>
  <x-editor>
    <x-ruler slot="hruler" offset="2.85" numbers="12,11,10,9,8,7,6,5,4,3,2,1,0,1,2,3,4,5,6"></x-ruler>
    <x-ruler slot="vruler" vertical offset="-5" numbers="9,8,7,6,5,4,3,2,1,0,1,2"></x-ruler>
    <x-slide>
      <span slot="title">Kliknij, aby edytować styl</span>
      <x-level marker="tri" msize="24" mcolor="#7079a4" mwidth="36" style="margin-left:14px;height:52px;font-size:45.1px">Kliknij, aby edytować style wzorca tekstu</x-level>
      <x-level marker="tri" msize="21" mcolor="#a0b9d2" mwidth="34" style="margin:14px 0 0 52px;height:40px;font-size:39.3px;color:#4a4a58">Drugi poziom</x-level>
      <x-level marker="tri" msize="20" mcolor="#bcbcc0" mwidth="30" style="margin:15px 0 0 94px;height:34px;font-size:33.8px">Trzeci poziom</x-level>
      <x-level marker="box" msize="15" mcolor="#8aa7c6" mwidth="28" style="margin:14px 0 0 133px;height:30px;font-size:30.7px">Czwarty poziom</x-level>
      <x-level marker="box" msize="13" mcolor="#a5c0dc" mwidth="30" style="margin:14px 0 0 169px;height:26px;font-size:27.8px">Piąty poziom</x-level>
      <x-content-icons style="left:573px;top:471px;width:104px;height:66px"></x-content-icons>
    </x-slide>
  </x-editor>
</x-app>`);
</script>
</body>
</html>
